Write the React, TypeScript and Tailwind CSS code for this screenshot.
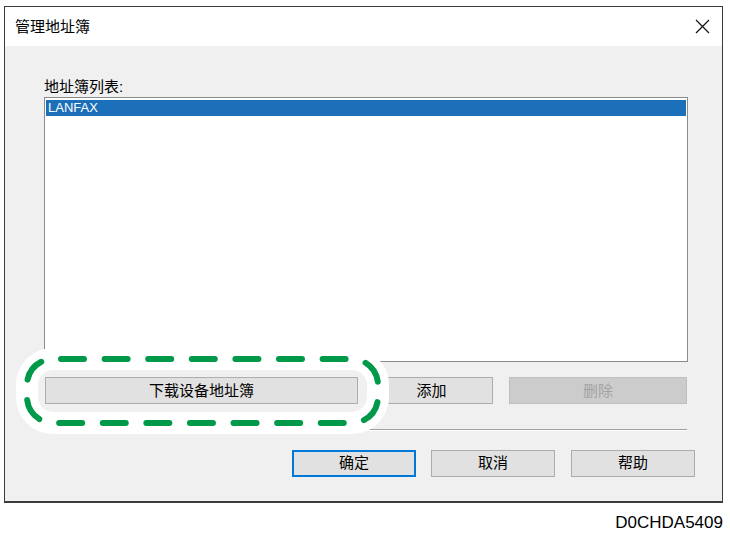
import React from "react";

const FONT = "'Liberation Sans', 'Noto Sans CJK SC', Arial, sans-serif";

function Btn({
  children,
  className = "",
}: {
  children: React.ReactNode;
  className?: string;
}) {
  return (
    <div
      className={`flex items-center justify-center h-[27px] bg-[#e1e1e1] border border-[#adadad] text-[15px] text-black ${className}`}
    >
      {children}
    </div>
  );
}

export default function App() {
  return (
    <div
      className="relative w-[730px] h-[536px] bg-white overflow-hidden"
      style={{ fontFamily: FONT }}
    >
      <div className="ml-[4px] mt-[6px] w-[719px] h-[497px] border border-[#3c3c3c] border-b-2 flex flex-col bg-[#f0f0f0]">
        {/* title bar */}
        <div className="h-[39px] bg-white flex items-center justify-between pl-[10px] pr-[12px]">
          <span className="text-[15px] text-black leading-[20px]">管理地址簿</span>
          <svg width="15" height="15" viewBox="0 0 15 15">
            <path d="M1 1 L14 14 M14 1 L1 14" stroke="#111" strokeWidth="1.2" fill="none" />
          </svg>
        </div>
        {/* body */}
        <div className="flex-1 pl-[39px] pt-[31px]">
          <div className="h-[20px] leading-[20px] text-[15px] text-black">地址簿列表:</div>
          <div className="w-[644px] h-[265px] border border-[#8a8a8a] bg-white px-[1px] pt-[2px]">
            <div className="h-[16px] bg-[#1c6fb9] text-white text-[13px] leading-[16px] pl-[2px]">
              LANFAX
            </div>
          </div>
          <div className="mt-[15px] flex">
            <Btn className="ml-[1px] w-[313px] pt-[2px]">下载设备地址簿</Btn>
            <Btn className="ml-[12px] w-[123px] pt-[2px]">添加</Btn>
            <div className="ml-[16px] w-[178px] h-[27px] pt-[2px] flex items-center justify-center bg-[#cccccc] border border-[#bfbfbf] text-[15px] text-[#a3a3a3]">
              删除
            </div>
          </div>
          <div className="mt-[25px] ml-[1px] w-[642px] h-[2px] border-t border-[#a0a0a0] border-b border-b-white" />
          <div className="mt-[19px] flex ml-[248px]">
            <div className="flex items-center justify-center w-[124px] h-[27px] bg-[#e1e1e1] border-2 border-[#0078d7] text-[15px] text-black">
              确定
            </div>
            <Btn className="ml-[15px] w-[124px]">取消</Btn>
            <Btn className="ml-[16px] w-[124px]">帮助</Btn>
          </div>
        </div>
      </div>
      <div className="mt-[10px] pr-[7px] text-right text-[17px] leading-[20px] text-black">
        D0CHDA5409
      </div>

      {/* highlight annotation */}
      <svg
        className="absolute left-[10px] top-[340px] pointer-events-none"
        width="390"
        height="100"
        viewBox="0 0 390 100"
      >
        <rect x="17" y="19" width="351" height="64" rx="26" fill="none" stroke="#ffffff" strokeWidth="22" />
        <rect
          x="17"
          y="19"
          width="351"
          height="64"
          rx="26"
          fill="none"
          stroke="#00994a"
          strokeWidth="6"
          strokeLinecap="round"
          strokeDasharray="23 20.6"
          strokeDashoffset="-8"
        />
      </svg>
    </div>
  );
}
